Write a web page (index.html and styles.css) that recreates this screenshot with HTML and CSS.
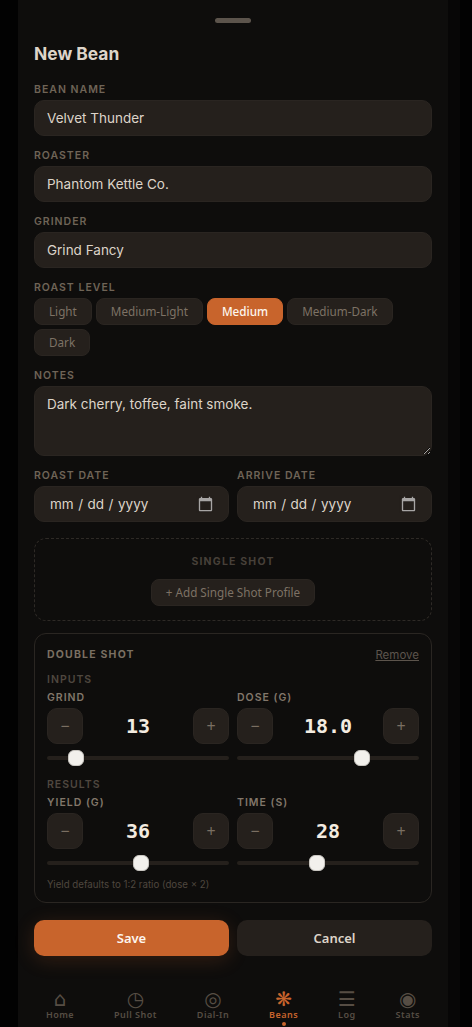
FILE: index.html
```html
<!DOCTYPE html>
<html lang="en">
<head>
  <meta charset="UTF-8">
  <meta name="viewport" content="width=device-width, initial-scale=1.0">
  <title>New Bean</title>
  <link rel="stylesheet" href="styles.css">
</head>
<body>
  <div class="sheet">
    <div class="handle"></div>
    <h2 class="sheet-title">New Bean</h2>

    <div class="field">
      <label class="field-label" for="beanName">Bean Name</label>
      <input class="text-input" id="beanName" type="text" value="Velvet Thunder">
    </div>
    <div class="field">
      <label class="field-label" for="roaster">Roaster</label>
      <input class="text-input" id="roaster" type="text" value="Phantom Kettle Co.">
    </div>
    <div class="field">
      <label class="field-label" for="grinder">Grinder</label>
      <input class="text-input" id="grinder" type="text" value="Grind Fancy">
    </div>

    <div class="field">
      <span class="field-label">Roast Level</span>
      <div class="chips">
        <button class="chip">Light</button>
        <button class="chip">Medium-Light</button>
        <button class="chip active">Medium</button>
        <button class="chip">Medium-Dark</button>
        <button class="chip">Dark</button>
      </div>
    </div>

    <div class="field">
      <label class="field-label" for="notes">Notes</label>
      <textarea class="text-input notes" id="notes">Dark cherry, toffee, faint smoke.</textarea>
    </div>

    <div class="two-col">
      <div>
        <label class="field-label" for="roastDate">Roast Date</label>
        <input class="text-input date-input" id="roastDate" type="date">
      </div>
      <div>
        <label class="field-label" for="arriveDate">Arrive Date</label>
        <input class="text-input date-input" id="arriveDate" type="date">
      </div>
    </div>

    <div class="empty-profile">
      <div class="profile-title">Single Shot</div>
      <button class="chip add-btn">+ Add Single Shot Profile</button>
    </div>

    <div class="profile">
      <div class="profile-head">
        <div class="profile-title">Double Shot</div>
        <a class="remove-link">Remove</a>
      </div>

      <div class="group-label">Inputs</div>
      <div class="two-col">
        <div>
          <span class="field-label bright">Grind</span>
          <div class="stepper">
            <button class="step-btn">−</button>
            <span class="step-value">13</span>
            <button class="step-btn">+</button>
          </div>
          <input class="slider" type="range" min="10" max="34" value="13">
        </div>
        <div>
          <span class="field-label bright">Dose (g)</span>
          <div class="stepper">
            <button class="step-btn">−</button>
            <span class="step-value">18.0</span>
            <button class="step-btn">+</button>
          </div>
          <input class="slider" type="range" min="12" max="20.5" step="0.1" value="18">
        </div>
      </div>

      <div class="group-label results">Results</div>
      <div class="two-col">
        <div>
          <span class="field-label bright">Yield (g)</span>
          <div class="stepper">
            <button class="step-btn">−</button>
            <span class="step-value">36</span>
            <button class="step-btn">+</button>
          </div>
          <input class="slider" type="range" min="20" max="51" value="36">
        </div>
        <div>
          <span class="field-label bright">Time (s)</span>
          <div class="stepper">
            <button class="step-btn">−</button>
            <span class="step-value">28</span>
            <button class="step-btn">+</button>
          </div>
          <input class="slider" type="range" min="15" max="45" value="28">
        </div>
      </div>

      <p class="hint">Yield defaults to 1:2 ratio (dose × 2)</p>
    </div>

    <div class="actions">
      <button class="action-btn save">Save</button>
      <button class="action-btn">Cancel</button>
    </div>

    <nav class="bottom-nav">
      <a class="nav-item"><span class="nav-icon">⌂</span>Home</a>
      <a class="nav-item"><span class="nav-icon">◷</span>Pull Shot</a>
      <a class="nav-item"><span class="nav-icon">◎</span>Dial-In</a>
      <a class="nav-item active"><span class="nav-icon">❋</span>Beans</a>
      <a class="nav-item"><span class="nav-icon">☰</span>Log</a>
      <a class="nav-item"><span class="nav-icon">◉</span>Stats</a>
    </nav>
  </div>
</body>
</html>
```

FILE: styles.css
```css
:root {
  --bg: #0e0d0c;
  --surface: #25201c;
  --border: #2a2622;
  --accent: #c8642c;
  --text: #ddd4c9;
  --muted: #6f6457;
  --dim: #4f473f;
}

* {
  box-sizing: border-box;
  margin: 0;
  padding: 0;
}

html, body {
  height: 100%;
  overflow: hidden;
}

body {
  background: #020202;
  font-family: 'Inter', sans-serif;
  color: var(--text);
  color-scheme: dark;
}

.sheet {
  width: 430px;
  height: 1027px;
  margin-left: 18px;
  padding: 18px 16px 0;
  background: var(--bg);
  box-shadow: 12px 0 0 #070606;
  display: flex;
  flex-direction: column;
}

.handle {
  width: 36px;
  height: 5px;
  border-radius: 3px;
  background: #5c544c;
  margin: 0 auto 20px;
  flex: none;
}

.sheet-title {
  font-size: 17.4px;
  font-weight: 700;
  line-height: 22px;
  margin-bottom: 17px;
}

.field {
  margin-bottom: 12px;
}

.field-label {
  display: block;
  font-size: 10.5px;
  font-weight: 600;
  line-height: 16px;
  letter-spacing: 1px;
  text-transform: uppercase;
  color: var(--muted);
  margin-bottom: 2px;
}

.field-label.bright {
  color: #82776a;
}

.text-input {
  display: block;
  width: 100%;
  height: 36px;
  padding: 0 12px;
  background: var(--surface);
  border: 1px solid #2a2521;
  border-radius: 10px;
  font-family: inherit;
  font-size: 13.5px;
  color: var(--text);
  outline: none;
}

.notes {
  height: 70px;
  padding: 8px 12px;
  line-height: 18px;
  resize: vertical;
}

.date-input {
  padding: 0 14.5px 0 14px;
}

.date-input::-webkit-datetime-edit-text {
  padding: 0 3.5px;
}

.date-input::-webkit-calendar-picker-indicator {
  width: 17px;
  height: 17px;
  padding: 0;
  opacity: 0.6;
}

.chips {
  display: flex;
  flex-wrap: wrap;
  gap: 4px;
}

.chip {
  height: 27px;
  padding: 0 14px 2px;
  background: var(--surface);
  border: 1px solid #2a2521;
  border-radius: 8px;
  font-family: 'Noto Sans', sans-serif;
  font-size: 11.7px;
  color: #7d7265;
}

.chip.active {
  background: var(--accent);
  border-color: var(--accent);
  color: #fdf6ee;
  font-weight: 500;
}

.two-col {
  display: grid;
  grid-template-columns: 1fr 1fr;
  gap: 8px;
}

.empty-profile {
  margin-top: 16px;
  height: 83px;
  padding-top: 15px;
  border: 1px dashed #2e2a26;
  border-radius: 12px;
  text-align: center;
}

.profile-title {
  font-size: 10.5px;
  font-weight: 700;
  line-height: 16px;
  letter-spacing: 1.2px;
  text-transform: uppercase;
  color: #7a6f62;
}

.empty-profile .profile-title {
  color: #474039;
  margin-bottom: 9px;
}

.profile {
  margin-top: 12px;
  height: 270px;
  padding: 13px 12px 0;
  border: 1px solid var(--border);
  border-radius: 12px;
}

.profile-head {
  display: flex;
  justify-content: space-between;
  align-items: center;
  margin-bottom: 9px;
}

.remove-link {
  font-size: 11.5px;
  color: #5c544c;
  text-decoration: underline;
}

.group-label {
  font-size: 10.5px;
  font-weight: 600;
  line-height: 16px;
  letter-spacing: 1px;
  text-transform: uppercase;
  color: var(--dim);
  margin-bottom: 2px;
}

.group-label.results {
  margin-top: 11px;
}

.stepper {
  display: flex;
  align-items: center;
}

.step-btn {
  width: 36px;
  height: 36px;
  flex: none;
  background: var(--surface);
  border: 1px solid #2a2521;
  border-radius: 10px;
  font-family: 'Noto Sans', sans-serif;
  font-size: 16px;
  color: #7a6f62;
}

.step-value {
  flex: 1;
  text-align: center;
  font-family: 'DejaVu Sans Mono', monospace;
  font-size: 20px;
  font-weight: 700;
  color: #f3ebe0;
}

.slider {
  display: block;
  width: 100%;
  height: 16px;
  margin-top: 6px;
  background: transparent;
  -webkit-appearance: none;
  appearance: none;
}

.slider::-webkit-slider-runnable-track {
  height: 4px;
  border-radius: 2px;
  background: #25201c;
}

.slider::-webkit-slider-thumb {
  -webkit-appearance: none;
  width: 16px;
  height: 16px;
  margin-top: -6px;
  border: 1px solid #c9c6c1;
  border-radius: 6px;
  background: #f2f0ec;
}

.hint {
  margin-top: 7px;
  font-size: 9.7px;
  line-height: 14px;
  color: var(--dim);
}

.actions {
  display: grid;
  grid-template-columns: 1fr 1fr;
  gap: 8px;
  margin-top: 17px;
}

.action-btn {
  height: 36px;
  background: var(--surface);
  border: none;
  border-radius: 10px;
  font-family: 'Noto Sans', sans-serif;
  font-size: 13px;
  font-weight: 600;
  color: var(--text);
}

.action-btn.save {
  background: var(--accent);
  color: #fdf6ee;
  box-shadow: 0 4px 20px rgba(200, 100, 44, 0.2);
}

.bottom-nav {
  margin-top: 33px;
  margin-left: -16px;
  margin-right: -16px;
  padding: 0 8px;
  display: flex;
  justify-content: space-around;
}

.nav-item {
  position: relative;
  display: flex;
  flex-direction: column;
  align-items: center;
  font-family: 'Noto Sans', sans-serif;
  font-size: 9px;
  font-weight: 600;
  line-height: 12px;
  letter-spacing: 0.5px;
  color: #564d44;
}

.nav-icon {
  font-family: 'DejaVu Sans', sans-serif;
  font-size: 20px;
  font-weight: 400;
  line-height: 20px;
  letter-spacing: 0;
}

.nav-item.active {
  color: var(--accent);
}

.nav-item.active::after {
  content: '';
  position: absolute;
  left: 50%;
  bottom: -5px;
  width: 4px;
  height: 4px;
  margin-left: -2px;
  border-radius: 50%;
  background: var(--accent);
}
```
